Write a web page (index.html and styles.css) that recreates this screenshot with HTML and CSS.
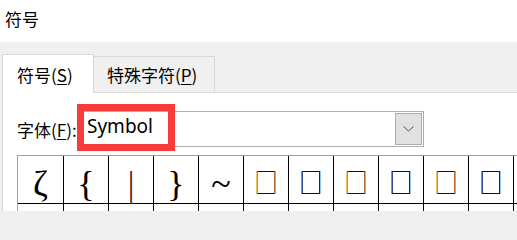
FILE: index.html
```html
<!DOCTYPE html>
<html lang="zh">
<head>
<meta charset="utf-8">
<title>符号</title>
<link rel="stylesheet" href="styles.css">
</head>
<body>
<div class="window">
  <header class="titlebar">符号</header>
  <div class="dialog">
    <div class="tabs">
      <div class="tab tab-active">符号(<u>S</u>)</div>
      <div class="tab tab-second">特殊字符(<u>P</u>)</div>
    </div>
    <div class="panel">
      <div class="font-row">
        <label class="font-label">字体(<u>F</u>):</label>
        <div class="combo">
          <span class="combo-text">Symbol</span>
          <span class="combo-btn">
            <svg class="chevron" width="11" height="6" viewBox="0 0 11 6"><polyline points="0.5,0.5 5.5,5 10.5,0.5" fill="none" stroke="#505050" stroke-width="1"/></svg>
          </span>
        </div>
        <div class="highlight"></div>
      </div>
      <div class="grid">
        <div class="row">
          <div class="cell glyph">ζ</div>
          <div class="cell glyph">{</div>
          <div class="cell glyph bar">|</div>
          <div class="cell glyph">}</div>
          <div class="cell glyph">~</div>
          <div class="cell boxcell"><span class="box box-orange"></span></div>
          <div class="cell boxcell"><span class="box box-blue"></span></div>
          <div class="cell boxcell"><span class="box box-orange"></span></div>
          <div class="cell boxcell"><span class="box box-blue"></span></div>
          <div class="cell boxcell"><span class="box box-orange"></span></div>
          <div class="cell boxcell"><span class="box box-blue"></span></div>
          <div class="cell boxcell"><span class="box box-orange"></span></div>
        </div>
        <div class="row">
          <div class="cell"></div>
          <div class="cell"></div>
          <div class="cell"></div>
          <div class="cell"></div>
          <div class="cell"></div>
          <div class="cell"></div>
          <div class="cell"></div>
          <div class="cell"></div>
          <div class="cell"></div>
          <div class="cell"></div>
          <div class="cell"></div>
          <div class="cell"></div>
        </div>
      </div>
    </div>
  </div>
</div>
</body>
</html>
```

FILE: styles.css
```css
html, body {
  margin: 0;
  padding: 0;
}

body {
  width: 517px;
  height: 211px;
  overflow: hidden;
  background: #f0f0f0;
  color: #000;
  font-family: "Noto Sans CJK SC", "Noto Sans", sans-serif;
}

.window {
  width: 517px;
  height: 211px;
  overflow: hidden;
}

.titlebar {
  height: 42px;
  background: #fff;
  padding-left: 5px;
  font-size: 17px;
  line-height: 38px;
}

.dialog {
  padding-top: 12px;
}

.tabs {
  display: flex;
  align-items: flex-end;
  height: 38px;
  padding-left: 2px;
}

.tab {
  box-sizing: border-box;
  display: flex;
  align-items: center;
  font-size: 17px;
  border: 1px solid #d9d9d9;
  border-bottom: none;
}

.tab-active {
  position: relative;
  z-index: 1;
  width: 92px;
  height: 39px;
  margin-bottom: -1px;
  padding-left: 14px;
  background: #fff;
}

.tab-second {
  width: 122px;
  height: 36px;
  margin-left: -1px;
  padding-left: 13px;
  background: #f0f0f0;
}

.tab u, .font-label u {
  text-underline-offset: 2px;
}

.panel {
  margin-left: 2px;
  height: 140px;
  background: #fff;
  border-top: 1px solid #d9d9d9;
  border-left: 1px solid #d9d9d9;
  padding-left: 14px;
}

.font-row {
  position: relative;
  display: flex;
  align-items: center;
  height: 36px;
  margin-top: 18px;
}

.font-label {
  width: 63px;
  font-size: 17px;
}

.combo {
  box-sizing: border-box;
  display: flex;
  width: 344px;
  height: 36px;
  padding: 1px 1px 1px 6px;
  border: 1px solid #adadad;
  background: #fff;
}

.combo-text {
  align-self: flex-start;
  font-family: "Noto Sans", "Open Sans", sans-serif;
  font-size: 19px;
  line-height: 26px;
}

.combo-btn {
  box-sizing: border-box;
  display: flex;
  align-items: center;
  justify-content: center;
  width: 27px;
  height: 32px;
  margin-left: auto;
  border: 1px solid #adadad;
  background: #e1e1e1;
}

.chevron {
  display: block;
}

.highlight {
  position: absolute;
  left: 60px;
  top: -7px;
  box-sizing: border-box;
  width: 98px;
  height: 47px;
  border: 7px solid #f73c3c;
}

.grid {
  width: max-content;
  margin-top: 8px;
  border-top: 1px solid #a0a0a0;
  border-left: 1px solid #a0a0a0;
}

.row {
  display: flex;
  border-bottom: 1px solid #000;
}

.cell {
  box-sizing: border-box;
  width: 45px;
  height: 47px;
  border-right: 1px solid #000;
}

.row .cell:first-child {
  width: 46px;
}

.glyph {
  padding-top: 9.5px;
  font-family: "Liberation Serif", "DejaVu Serif", serif;
  font-size: 36px;
  line-height: 36px;
  text-align: center;
}

.bar {
  color: #6e1e1e;
}

.boxcell {
  display: flex;
  justify-content: center;
  padding-top: 15px;
}

.box {
  box-sizing: border-box;
  display: block;
  width: 18px;
  height: 23px;
  border: 1.5px solid #111;
}

.box-orange {
  border-left-color: #c98a3a;
  border-right-color: #b86a36;
  box-shadow: -1px 0 0 #f4c060, 1px 0 0 #e0a070;
}

.box-blue {
  border-left-color: #2a4f9a;
  border-right-color: #1d2a44;
  box-shadow: -1px 0 0 #6a94e4, 1px 0 0 #8cc8f2;
}
```
